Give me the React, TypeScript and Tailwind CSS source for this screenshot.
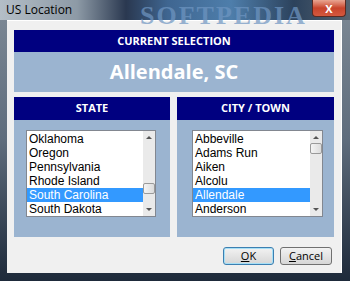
import React from "react";

const states = ["Oklahoma", "Oregon", "Pennsylvania", "Rhode Island", "South Carolina", "South Dakota"];
const cities = ["Abbeville", "Adams Run", "Aiken", "Alcolu", "Allendale", "Anderson"];

function ListBox({
  items,
  selected,
  thumbTop,
  width,
}: {
  items: string[];
  selected: string;
  thumbTop: number;
  width: string;
}) {
  return (
    <div className={`flex h-[87px] ${width} border border-[#828790] bg-white`}>
      <div
        className="flex flex-1 flex-col pt-[1px]"
        style={{ fontFamily: '"Liberation Sans", Arial, sans-serif' }}
      >
        {items.map((it) => (
          <div
            key={it}
            className={`h-[14px] pl-[2px] text-[12px] leading-[14px] ${
              it === selected ? "bg-[#3399ff] text-white" : "text-black"
            }`}
          >
            {it}
          </div>
        ))}
      </div>
      <div className="relative w-[12px] bg-[#eaeaea]">
        <div className="absolute left-[3px] top-[5px] h-0 w-0 border-x-[3px] border-b-[3px] border-x-transparent border-b-[#555]" />
        <div
          className="absolute left-0 h-[11px] w-[12px] rounded-[2px] border border-[#9a9a9a] bg-gradient-to-r from-[#f4f4f4] to-[#dcdcdc]"
          style={{ top: thumbTop }}
        />
        <div className="absolute bottom-[5px] left-[3px] h-0 w-0 border-x-[3px] border-t-[3px] border-x-transparent border-t-[#555]" />
      </div>
    </div>
  );
}

export default function App() {
  return (
    <div
      className="flex h-[281px] w-[350px] flex-col overflow-hidden bg-gradient-to-b from-[#7e8a96] via-[#5e6c7c] to-[#1e2a3a]"
      style={{ fontFamily: '"Open Sans", "Noto Sans", sans-serif' }}
    >
      <div className="relative h-[20px] bg-[linear-gradient(90deg,#b4bec7_0%,#8d9aa6_22%,#2a3850_36%,#3f6691_48%,#4e7eab_66%,#2c425c_84%,#56636f_100%)]">
        <span className="absolute left-[6px] top-[2px] text-[12px] leading-[16px] text-black">US Location</span>
        <span
          className="absolute left-[140px] top-[-4px] text-[26px] font-bold tracking-[2px] text-[#6f96c2] opacity-70"
          style={{ fontFamily: '"Liberation Serif", serif' }}
        >
          SOFTPEDIA
        </span>
        <div className="absolute right-[4px] top-0 flex h-[17px] w-[34px] items-center justify-center rounded-b-[4px] border border-t-0 border-[#5a2a22] bg-gradient-to-b from-[#e8a592] via-[#c8442c] to-[#d4583e]">
          <span className="text-[11px] font-bold leading-none text-white">X</span>
        </div>
      </div>
      <div className="ml-[7px] flex h-[253px] w-[335px] flex-col border-t border-r border-white bg-[#f0f0f0] pl-[7px] pr-[8px] pt-[9px]">
        <div className="flex w-[320px] flex-col">
          <div className="flex h-[22px] items-center justify-center bg-[#000080] text-[11px] font-bold text-white">
            CURRENT SELECTION
          </div>
          <div className="flex h-[40px] items-center justify-center bg-[#9bb4d0] text-[20px] font-bold text-white">
            Allendale, SC
          </div>
        </div>
        <div className="mt-[5px] flex h-[140px] w-[320px] gap-[7px]">
          <div className="flex w-[156px] flex-col bg-[#9bb4d0]">
            <div className="flex h-[23px] items-center justify-center bg-[#000080] text-[11px] font-bold text-white">
              STATE
            </div>
            <div className="pl-[12px] pt-[10px]">
              <ListBox items={states} selected="South Carolina" thumbTop={52} width="w-[130px]" />
            </div>
          </div>
          <div className="flex w-[157px] flex-col bg-[#9bb4d0]">
            <div className="flex h-[23px] items-center justify-center bg-[#000080] text-[11px] font-bold text-white">
              CITY / TOWN
            </div>
            <div className="pl-[15px] pt-[10px]">
              <ListBox items={cities} selected="Allendale" thumbTop={12} width="w-[131px]" />
            </div>
          </div>
        </div>
        <div className="mt-[10px] flex justify-end gap-[6px] pr-[1px]">
          <button className="flex h-[18px] w-[51px] items-center justify-center rounded-[3px] border border-[#3c7fb1] bg-gradient-to-b from-[#f2f2f2] to-[#d6d6d6] text-[11px] text-black shadow-[inset_0_0_0_1px_#a6dff6]">
            <span>
              <u>O</u>K
            </span>
          </button>
          <button className="flex h-[18px] w-[52px] items-center justify-center rounded-[3px] border border-[#707070] bg-gradient-to-b from-[#f2f2f2] to-[#d6d6d6] text-[11px] text-black">
            <span>
              <u>C</u>ancel
            </span>
          </button>
        </div>
      </div>
    </div>
  );
}
